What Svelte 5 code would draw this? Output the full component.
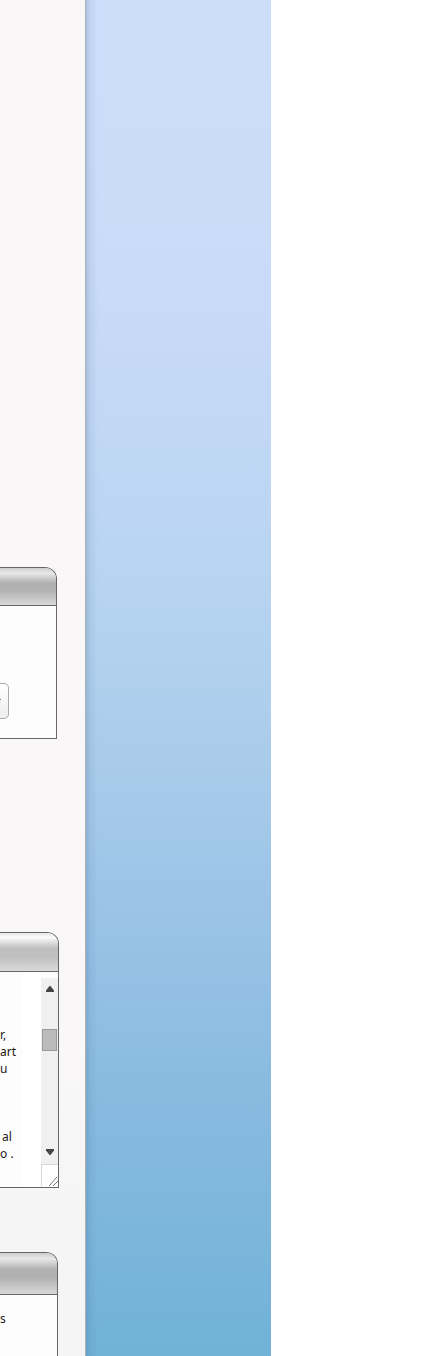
<script>
  const lines = [
    { text: 'r,', indent: 0 },
    { text: 'art', indent: 0 },
    { text: 'u', indent: 0 },
    { text: '', indent: 0 },
    { text: '', indent: 0 },
    { text: '', indent: 0 },
    { text: 'al', indent: 2 },
    { text: 'o .', indent: 0 }
  ];
</script>

<div class="page">
  <main class="sheet">
    <section class="panel choice">
      <header></header>
      <div class="body">
        <button type="button" aria-label="Choose">
          <svg width="2" height="4" viewBox="0 0 2 4"><path d="M0 0H1V1H0Z" fill="#7672a8" /><path d="M0 3H1V4H0Z" fill="#d8dce6" /></svg>
        </button>
      </div>
    </section>

    <section class="panel reader">
      <header></header>
      <div class="body">
        <div class="copy">
          {#each lines as line}
            <p style:padding-left="{line.indent}px">{line.text}</p>
          {/each}
        </div>
        <div class="gutter"></div>
        <div class="scroll">
          <div class="track">
            <button type="button" aria-label="Scroll up">
              <svg width="8" height="6" viewBox="0 0 8 6"><path d="M3.5 0h1L8 4.5V6H0V4.5Z" fill="#444" /></svg>
            </button>
            <div class="thumb"></div>
            <button type="button" class="down" aria-label="Scroll down">
              <svg width="8" height="6" viewBox="0 0 8 6"><path d="M0 0H8V1.5L4.5 6h-1L0 1.5Z" fill="#444" /></svg>
            </button>
          </div>
          <div class="grip">
            <svg width="9" height="10" viewBox="0 0 9 10"><path d="M0 10 8 1M4 10 9 5" stroke="#777" fill="none" /></svg>
          </div>
        </div>
      </div>
    </section>

    <section class="panel last">
      <header></header>
      <div class="body"><p>s</p></div>
    </section>
  </main>
  <aside></aside>
</div>

<style>
  :global(body) {
    margin: 0;
    background: #fff;
  }
  .page {
    display: grid;
    grid-template-columns: 86px minmax(0, 185px);
    height: 100vh;
    overflow: hidden;
    font: 12px/17px "Noto Sans", "Open Sans", sans-serif;
    color: #231815;
  }
  .sheet {
    box-sizing: border-box;
    min-height: 0;
    overflow: hidden;
    padding-top: 567px;
    border-right: 1px solid #aeb0b3;
    background: linear-gradient(#f9f7f8 0, #f9f7f8 78%, #f5f5f5 94%, #f5f5f5);
  }
  aside {
    background:
      linear-gradient(90deg, rgba(50, 85, 130, 0.2), rgba(50, 85, 130, 0.08) 4px, rgba(50, 85, 130, 0) 12px),
      linear-gradient(#cddefb 0, #cbdcf9 16%, #c3d8f5 30%, #b5d3f0 45%, #a9ccea 56%, #9cc4e8 66%, #87bade 82%, #71b2d8);
  }
  .panel {
    box-sizing: border-box;
    border: 1px solid #666;
    border-left: 0;
    border-radius: 0 12px 0 0;
    background: #fdfdfd;
    overflow: hidden;
  }
  header {
    height: 37px;
    border-bottom: 1px solid #666;
    background: linear-gradient(#cdcdcd 0, #e8e8e8 14%, #cfcfcf 26%, #b1b1b1 40%, #b1b1b1 60%, #c6c6c6 82%, #d8d8d8);
  }
  p {
    margin: 0;
    height: 17px;
    white-space: pre;
  }
  .choice {
    width: 57px;
    margin-bottom: 193px;
  }
  .choice .body {
    padding: 77px 0 19px;
  }
  .choice button {
    display: flex;
    align-items: center;
    box-sizing: border-box;
    width: 9px;
    height: 36px;
    padding: 0;
    border: 1px solid #aaa;
    border-left: 0;
    border-radius: 0 5px 5px 0;
    background: linear-gradient(#fff, #eee);
  }
  .reader {
    width: 59px;
    margin-bottom: 64px;
  }
  .reader header {
    height: 38px;
    background: linear-gradient(#e6e6e6 0, #fbfbfb 12%, #dcdcdc 26%, #bfbfbf 40%, #bfbfbf 62%, #ccc 82%, #dadada);
  }
  .reader .body {
    display: grid;
    grid-template-columns: 22px 1fr 17px;
    height: 215px;
  }
  .copy {
    padding-top: 54px;
  }
  .gutter {
    background: #fff;
  }
  .scroll {
    display: flex;
    flex-direction: column;
    padding: 6px 0 1px;
  }
  .track {
    display: flex;
    flex: 1;
    flex-direction: column;
    align-items: center;
    background: #f0f0f0;
  }
  .track button {
    display: grid;
    place-items: center;
    width: 17px;
    height: 22px;
    padding: 0;
    border: 0;
    background: none;
  }
  .track .down {
    margin-top: auto;
    height: 24px;
  }
  .thumb {
    box-sizing: border-box;
    width: 15px;
    height: 22px;
    margin-top: 29px;
    border: 1px solid #999;
    background: #bbb;
  }
  .grip {
    display: flex;
    justify-content: flex-end;
    align-items: flex-end;
    height: 21px;
    border: 1px solid #d5d5d5;
    border-width: 1px 0 0 1px;
    background: #fff;
  }
  .last {
    width: 58px;
    height: 200px;
  }
  .last header {
    height: 41px;
  }
  .last .body {
    padding-top: 15px;
  }
</style>
